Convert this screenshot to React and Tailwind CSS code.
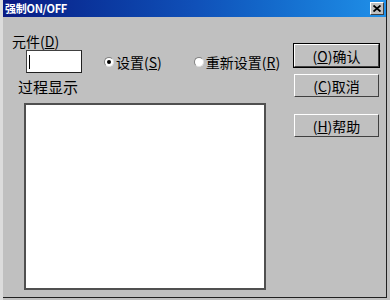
import React from "react";

const font = { fontFamily: '"Noto Sans CJK SC", "Liberation Sans", sans-serif' };

function Button({ children, isDefault }) {
  return (
    <div
      className={
        "w-[87px] h-[25px] " +
        (isDefault ? "border border-black" : "border border-transparent")
      }
    >
      <div className="w-full h-full border-t border-l border-white border-r border-b border-r-[#404040] border-b-[#404040] bg-[#c0c0c0] flex items-center justify-center text-[14px] leading-none text-black">
        {children}
      </div>
    </div>
  );
}

function Radio({ checked }) {
  return (
    <div className="w-[10px] h-[10px] rounded-full bg-white border border-t-[#808080] border-l-[#808080] border-r-[#e0e0e0] border-b-[#e0e0e0] flex items-center justify-center">
      {checked && <div className="w-[4px] h-[4px] rounded-full bg-black" />}
    </div>
  );
}

export default function App() {
  return (
    <div className="w-[390px] h-[300px] bg-[#c0c0c0] flex overflow-hidden" style={font}>
      <div className="w-[3px] h-full bg-[#dcdcdc]" />
      <div className="w-[384px] h-[298px] flex flex-col border-r border-b border-r-[#202020] border-b-[#202020]">
        <div className="h-[17px] flex items-center justify-between pl-[2px] pr-[2px] bg-gradient-to-r from-[#0a1a84] via-[#1050b8] to-[#2090e8]">
          <span className="text-white text-[11px] leading-none font-bold tracking-tight">强制ON/OFF</span>
          <div className="w-[14px] h-[13px] bg-[#c0c0c0] border-t border-l border-white border-r border-b border-r-[#404040] border-b-[#404040] flex items-center justify-center">
            <svg width="8" height="7" viewBox="0 0 8 7">
              <path d="M0.5 0.5 L7.5 6.5 M7.5 0.5 L0.5 6.5" stroke="black" strokeWidth="1.8" />
            </svg>
          </div>
        </div>
        <div className="flex flex-1">
          <div className="w-[290px] flex flex-col pl-[9px] pt-[16px]">
            <div className="text-[14px] leading-[16px] text-black">
              元件(<span className="underline">D</span>)
            </div>
            <div className="flex items-center mt-[1px]">
              <div className="ml-[14px] w-[56px] h-[23px] bg-white border border-t-[#404040] border-l-[#404040] border-r-[#202020] border-b-[#202020] flex items-center pl-[2px]">
                <div className="w-[1px] h-[14px] bg-black" />
              </div>
              <div className="ml-[22px] flex items-center gap-[2px]">
                <Radio checked />
                <span className="text-[14px] leading-none text-black">设置(<span className="underline">S</span>)</span>
              </div>
              <div className="ml-[32px] flex items-center gap-[2px]">
                <Radio />
                <span className="text-[14px] leading-none text-black">重新设置(<span className="underline">R</span>)</span>
              </div>
            </div>
            <div className="ml-[6px] mt-[5px] text-[15px] leading-[18px] text-black">过程显示</div>
            <div className="ml-[12px] mt-[7px] w-[242px] h-[187px] bg-white border-2 border-[#505050]" />
          </div>
          <div className="flex flex-col pt-[26px]">
            <Button isDefault>(<span className="underline">O</span>)确认</Button>
            <div className="mt-[5px]">
              <Button>(<span className="underline">C</span>)取消</Button>
            </div>
            <div className="mt-[15px]">
              <Button>(<span className="underline">H</span>)帮助</Button>
            </div>
          </div>
        </div>
      </div>
    </div>
  );
}
